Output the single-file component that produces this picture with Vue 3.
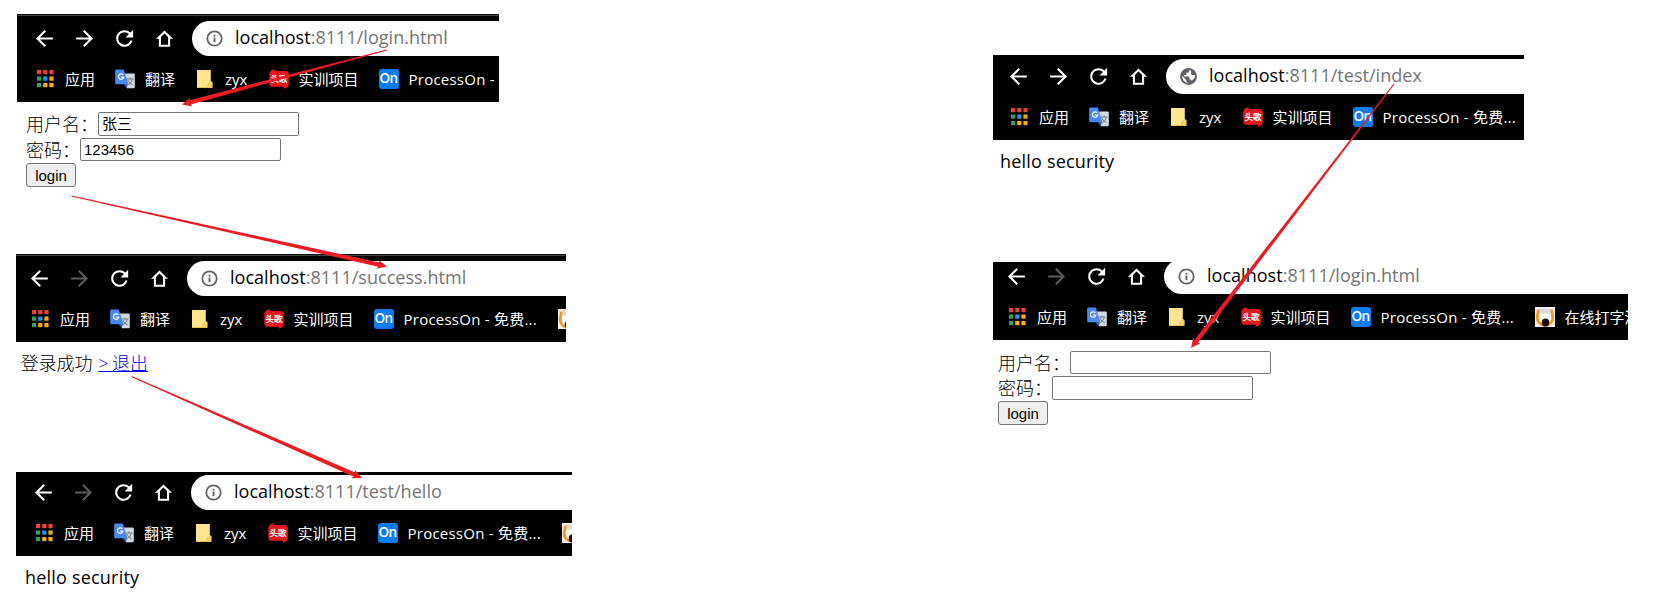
<script setup>
const windows = [
  { id: 'login', x: 17, y: 14, w: 482, h: 88, start: 17, pill: 7, edge: true, fwd: true, icon: 'info', path: ':8111/login.html', marks: 5, cut: true },
  { id: 'success', x: 16, y: 254, w: 550, h: 88, start: 13, pill: 7, edge: true, fwd: false, icon: 'info', path: ':8111/success.html', marks: 6 },
  { id: 'hello', x: 16, y: 472, w: 556, h: 84, start: 17, pill: 3, fwd: false, icon: 'info', path: ':8111/test/hello', marks: 6 },
  { id: 'index', x: 993, y: 55, w: 531, h: 85, start: 15, pill: 4, fwd: true, icon: 'globe', path: ':8111/test/index', marks: 5 },
  { id: 'relogin', x: 993, y: 262, w: 635, h: 78, start: 13, pill: -3, fwd: false, icon: 'info', path: ':8111/login.html', marks: 6, wide: true },
]

const bookmarks = [
  { icon: 'apps', text: '应用', w: 30 },
  { icon: 'translate', text: '翻译', w: 30 },
  { icon: 'folder', text: 'zyx', w: 23.5 },
  { icon: 'touge', text: '实训项目', w: 60 },
  { icon: 'on', text: 'ProcessOn - 免费...', w: 134 },
  { icon: 'typing', text: '在线打字测', w: 75 },
]

function label(win, b) {
  if (b.icon === 'on' && win.cut) return 'ProcessOn -'
  if (b.icon === 'typing' && !win.wide) return ''
  return b.text
}

const forms = [
  { id: 'f1', x: 26, y: 112, user: '张三', pass: '123456', h: [24, 23, 24], gap: [2, 2] },
  { id: 'f2', x: 998, y: 351, user: '', pass: '', h: [23, 24, 24], gap: [2, 1] },
]

const dots = ['#ea4335', '#ea4335', '#ea4335', '#34a05a', '#2196f3', '#fbac05', '#34a05a', '#fbac05', '#fbac05']

function arrow(x1, y1, x2, y2) {
  const len = Math.hypot(x2 - x1, y2 - y1)
  const ux = (x2 - x1) / len
  const uy = (y2 - y1) / len
  const at = (d, o) => `${(x2 - ux * d - uy * o).toFixed(2)},${(y2 - uy * d + ux * o).toFixed(2)}`
  return [at(len, 0.6), at(8.5, 2.2), at(9.5, 4.5), at(0, 0), at(9.5, -4.5), at(8.5, -2.2), at(len, -0.6)].join(' ')
}

const arrows = [
  arrow(387, 50, 182, 104.5),
  arrow(71.5, 196, 387, 266.5),
  arrow(131.5, 376.5, 362, 478),
  arrow(1394, 84, 1191, 348),
]
</script>

<template>
  <main class="board">
    <section
      v-for="w in windows"
      :key="w.id"
      class="chrome"
      :class="{ edge: w.edge }"
      :style="{ left: w.x + 'px', top: w.y + 'px', width: w.w + 'px', height: w.h + 'px' }"
    >
      <div class="inner" :style="{ marginTop: w.pill + 'px', paddingLeft: w.start + 'px' }">
        <div class="toolbar">
          <svg class="nav" viewBox="0 0 24 24"><path d="M20 11H7.6l5.8-5.8L12 3.8 3.8 12l8.2 8.2 1.4-1.4L7.6 13H20z" /></svg>
          <svg class="nav" :class="{ off: !w.fwd }" viewBox="0 0 24 24"><path d="M4 11h12.4l-5.8-5.8L12 3.8l8.2 8.2-8.2 8.2-1.4-1.4 5.8-5.8H4z" /></svg>
          <svg class="nav" viewBox="0 0 24 24"><path d="M17.65 6.35A7.96 7.96 0 0 0 12 4a8 8 0 1 0 7.73 10h-2.08A6 6 0 1 1 12 6c1.66 0 3.14.69 4.22 1.78L13 11h7.3V3.7z" /></svg>
          <svg class="nav" viewBox="0 0 24 24"><path d="M12 4.2 3.8 12.3h2.8V20h10.8v-7.7h2.8zM8.6 18v-7.5L12 7.1l3.4 3.4V18z" /></svg>
          <div class="omnibox">
            <svg v-if="w.icon === 'info'" class="site" viewBox="0 0 18 18">
              <circle cx="9" cy="9" r="7.6" fill="none" stroke="#5f6368" stroke-width="1.9" />
              <path d="M8 8h2v5H8zM8 4.900h2v2H8z" fill="#5f6368" />
            </svg>
            <svg v-else class="site" viewBox="0 0 18 18">
              <circle cx="9" cy="9" r="8.9" fill="#5f6368" />
              <path d="M9.6 2v1.6c0 .8-.7 1.4-1.5 1.4H6.700v1.600c0 .5-.4.8-.8.8H4.300V9h4.900c.5 0 .8.4.8.8v2.500h.8c.7 0 1.300.5 1.500 1.100A6.800 6.800 0 0 0 15.800 9c0-.6-.1-1.100-.2-1.600h-2.300c-.9 0-1.600-.8-1.600-1.600V3.200A6.500 6.500 0 0 0 9.600 2z" fill="#fff" />
              <path d="M2.300 8.300 6.600 12.600v.8c0 .9.7 1.600 1.600 1.600v.8A6.900 6.900 0 0 1 2.300 8.300z" fill="#fff" />
            </svg>
            <span class="url"><span class="host">localhost</span>{{ w.path }}</span>
          </div>
        </div>
        <div class="bookmarks">
          <div v-for="b in bookmarks.slice(0, w.marks)" :key="b.icon" class="mark">
            <svg v-if="b.icon === 'apps'" viewBox="0 0 20 20">
              <rect v-for="(c, i) in dots" :key="i" :x="2 + (i % 3) * 6.2" :y="1 + Math.floor(i / 3) * 6.5" width="4.2" height="4.2" :fill="c" />
            </svg>
            <svg v-else-if="b.icon === 'translate'" viewBox="0 0 20 20">
              <path d="M7 4.500h11.500A1.300 1.300 0 0 1 19.800 6v12a1.300 1.300 0 0 1-1.300 1.300H12z" fill="#d5d8dc" />
              <path d="M11.800 10h6.600M15 8.500V10M17.300 10.200c-.7 2.700-2.200 4.400-4.300 5.500M12.800 11c1 2.300 2.600 3.800 4.800 4.800" stroke="#6b7a83" stroke-width="1" fill="none" />
              <path d="M8.500 15.300h4.500l-1.500 4z" fill="#3058b0" />
              <path d="M1.500.5h7.300l4.700 14.800H1.500A1.300 1.300 0 0 1 .2 14V1.800A1.300 1.300 0 0 1 1.500.5z" fill="#4a89f3" />
              <path d="M8.300 6A2.700 2.700 0 1 0 8.800 8.200H6.200" stroke="#fff" stroke-width="1.2" fill="none" />
            </svg>
            <svg v-else-if="b.icon === 'folder'" viewBox="0 0 20 20">
              <path d="M2 1h13.800v11.500l1.500.5v5.800H2z" fill="#ffe58f" />
              <path d="M13 18.500v-3.500l2.800-2.500 1.300.7v5.300z" fill="#f9da6a" stroke="#e2b944" stroke-width=".7" />
              <path d="M2 18.500h15" stroke="#e8c558" stroke-width=".9" />
            </svg>
            <svg v-else-if="b.icon === 'touge'" viewBox="0 0 20 20">
              <path d="M5 .3 7 2h9.500A3.300 3.300 0 0 1 19.800 5.500v9.500c0 2.300-1.500 3.500-4.300 4.700L14.300 17.800H4A3.700 3.700 0 0 1 .3 14V5C.3 3 2 1.200 5 .3z" fill="#e3181c" />
              <text x="10" y="13.4" text-anchor="middle" class="touge">头歌</text>
            </svg>
            <span v-else-if="b.icon === 'on'" class="on">On</span>
            <svg v-else viewBox="0 0 20 20">
              <path d="M0 0h20v20H0z" fill="#f4f1ef" />
              <path d="M4.500 1.500h11v5h-11z" fill="#dcdcdf" />
              <path d="M3.200 2.500c.3 3-1 5-1 8 0 4 3 7.800 7.800 7.800s7.800-3.800 7.800-7.800c0-3-1.300-5-1-8" fill="none" stroke="#f39a1c" stroke-width="2.8" />
              <path d="M4.500 7h11v4a5.500 5.500 0 0 1-11 0z" fill="#fff" />
              <ellipse cx="10.5" cy="15.5" rx="3.7" ry="4" fill="#210808" />
            </svg>
            <span class="name" :class="{ latin: b.icon === 'on' }" :style="{ width: b.w + 'px' }">{{ label(w, b) }}</span>
          </div>
        </div>
      </div>
    </section>

    <form v-for="f in forms" :key="f.id" class="form" :style="{ left: f.x + 'px', top: f.y + 'px' }" @submit.prevent>
      <div class="row" :style="{ height: f.h[0] + 'px', marginBottom: f.gap[0] + 'px' }">
        <span class="caption">用户名：</span><span class="field">{{ f.user }}</span>
      </div>
      <div class="row" :style="{ height: f.h[1] + 'px', marginBottom: f.gap[1] + 'px' }">
        <span class="caption">密码：</span><span class="field">{{ f.pass }}</span>
      </div>
      <button class="btn" :style="{ height: f.h[2] + 'px' }">login</button>
    </form>

    <p class="text done">登录成功 <a><span class="gt">&gt;</span>退出</a></p>
    <p class="text hello">hello security</p>
    <p class="text index">hello security</p>

    <svg class="arrows" viewBox="0 0 1656 605">
      <polygon v-for="(a, i) in arrows" :key="i" :points="a" />
    </svg>
  </main>
</template>

<style>
body {
  background: #fff;
  overflow: hidden;
}
</style>

<style scoped>
.board {
  position: relative;
  width: 1656px;
  height: 605px;
  overflow: hidden;
  background: #fff;
  font-family: "Open Sans", "Noto Sans CJK SC", sans-serif;
  color: #000;
}
.chrome {
  position: absolute;
  display: flex;
  overflow: hidden;
  background: #000;
  box-sizing: border-box;
}
.chrome.edge {
  background: linear-gradient(#101010 1px, #414141 1px, #414141 2px, #000 2px);
}
.inner {
  flex: 1;
  min-width: 0;
}
.toolbar {
  display: flex;
  align-items: center;
  height: 35px;
  margin-left: -2px;
}
.nav {
  flex: none;
  width: 25px;
  height: 25px;
  margin: 0 15px 1px 0;
  fill: #fff;
}
.nav.off {
  fill: #5c5c5c;
}
.omnibox {
  display: flex;
  flex: 1;
  align-items: center;
  height: 35px;
  padding-left: 14px;
  border-radius: 17.5px 0 0 17.5px;
  background: #fff;
}
.site {
  flex: none;
  width: 17px;
  height: 17px;
  margin-right: 12px;
}
.url {
  padding-bottom: 2px;
  font-size: 18px;
  line-height: 33px;
  letter-spacing: 0.03px;
  white-space: nowrap;
  color: #757575;
}
.host {
  color: #000;
}
.bookmarks {
  display: flex;
  align-items: center;
  gap: 20px;
  height: 46px;
  padding-left: 1px;
}
.mark {
  display: flex;
  flex: none;
  align-items: center;
  gap: 10px;
}
.mark svg {
  flex: none;
  width: 20px;
  height: 20px;
}
.touge {
  font: 700 8.5px "Noto Sans CJK SC", sans-serif;
  fill: #fff;
}
.on {
  width: 20px;
  height: 20px;
  border-radius: 3px;
  background: #087cf0;
  color: #fff;
  font-size: 13.5px;
  font-weight: 600;
  line-height: 19px;
  letter-spacing: -0.5px;
  text-align: center;
}
.name {
  font-size: 15px;
  line-height: 22px;
  white-space: nowrap;
  color: #fff;
}
.name.latin {
  letter-spacing: 0.24px;
}
.form {
  position: absolute;
  font-size: 18px;
}
.row {
  display: flex;
  align-items: center;
  white-space: nowrap;
}
.caption {
  padding-bottom: 2px;
  font-weight: 300;
}
.field {
  box-sizing: border-box;
  width: 201px;
  height: 100%;
  padding-left: 3px;
  border: 1px solid #767676;
  border-radius: 2px;
  background: #fff;
  font: 15px/22px "Liberation Sans", "Noto Sans CJK SC", sans-serif;
}
.btn {
  display: block;
  box-sizing: border-box;
  width: 50px;
  padding: 0;
  border: 1px solid #767676;
  border-radius: 3px;
  background: #efefef;
  color: #000;
  font: 15px "Liberation Sans", sans-serif;
}
.text {
  position: absolute;
  margin: 0;
  font-size: 18px;
  line-height: 26px;
  letter-spacing: 0.2px;
  white-space: nowrap;
}
.done {
  left: 20.5px;
  top: 350px;
  letter-spacing: 0;
  word-spacing: 1px;
  font-weight: 300;
}
.done a {
  color: #00e;
  text-decoration: underline;
}
.gt {
  letter-spacing: 3.5px;
}
.hello {
  left: 25px;
  top: 564px;
}
.index {
  left: 1000px;
  top: 148px;
}
.arrows {
  position: absolute;
  left: 0;
  top: 0;
  width: 1656px;
  height: 605px;
  fill: #ed1c24;
}
</style>
